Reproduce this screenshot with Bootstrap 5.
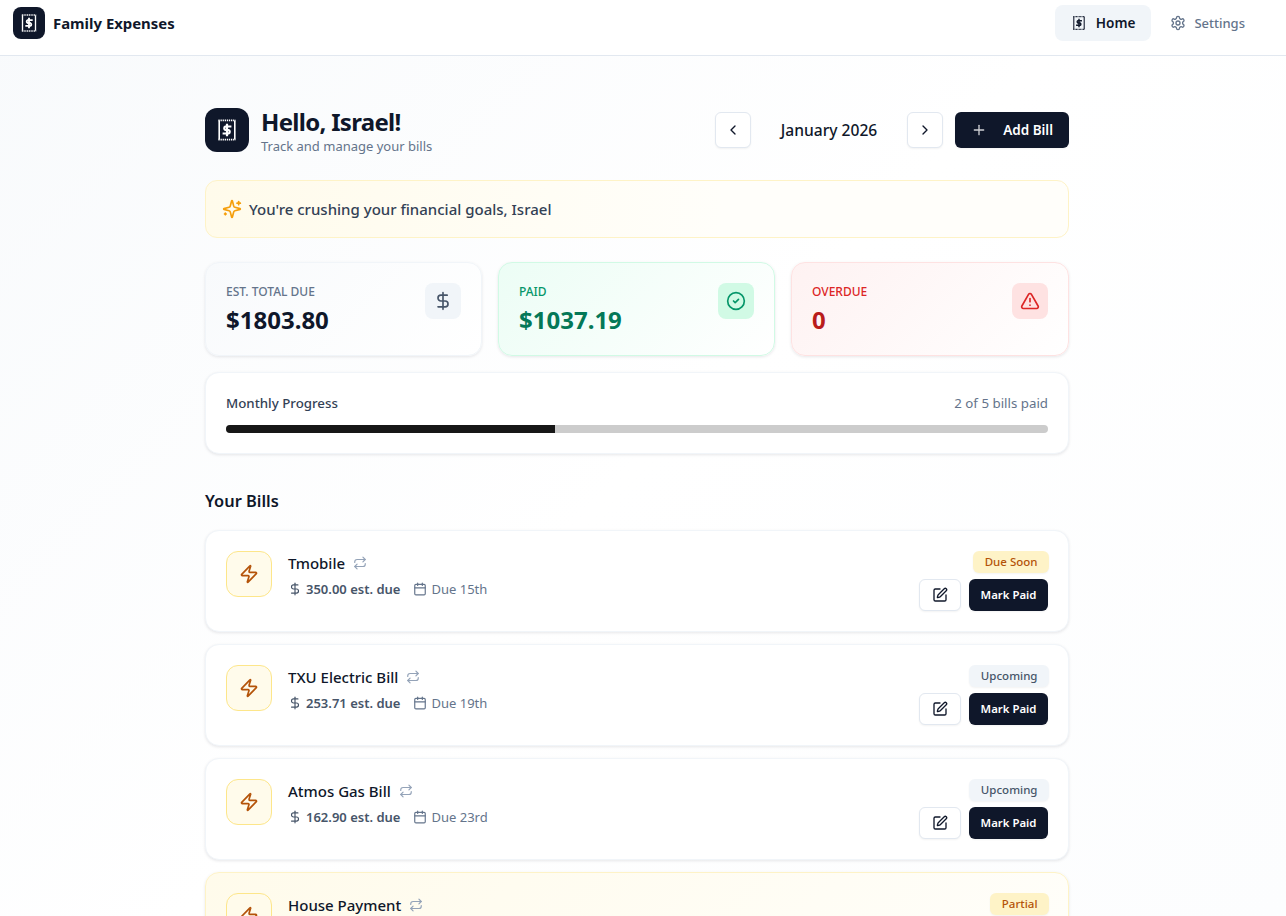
<!doctype html>
<html lang="en">
<head>
<meta charset="utf-8">
<title>Family Expenses</title>
<link href="https://cdn.jsdelivr.net/npm/bootstrap@5.3.0/dist/css/bootstrap.min.css" rel="stylesheet">
<style>
html,body{height:916px;overflow:hidden}
body{font-family:"Noto Sans",sans-serif;color:#0f172a;background:linear-gradient(135deg,#f8fafc 0%,#ffffff 50%,#fcfdfe 100%);font-size:14px}
svg.ic{fill:none;stroke:currentColor;stroke-width:2;stroke-linecap:round;stroke-linejoin:round;flex:none;display:block}
.topbar{height:56px;background:#fff;border-bottom:1px solid #e2e8f0;padding:5px 25px 14px 13px}
.logo-box{width:32px;height:32px;border-radius:8px;background:#0f172a;color:#fff}
.brand-text{font-size:14.9px;font-weight:700;color:#0f172a}
.nav-set{gap:3px}
.nav-pill{height:36px;padding:1px 16px 0;border-radius:8px;font-size:13px;font-weight:500;color:#64748b;text-decoration:none;gap:8px}
.nav-pill svg{margin-top:-1px}
.nav-pill.on{background:#f1f5f9;color:#0f172a;font-weight:600;font-size:13.6px;padding:0 16px 0 16px;gap:9px;margin-left:1px}
.nav-pill.on svg{margin-top:0}
.page-frame{width:1274px}
.page-col{width:864px;margin:0 auto;padding-top:52px}
.hello-gap{gap:12px}
.hello-box{width:44px;height:44px;border-radius:12px;background:#0f172a;color:#fff}
.hello-title{font-size:24px;font-weight:700;line-height:28px;margin:0;color:#0f172a;letter-spacing:-.7px}
.hello-sub{font-size:13px;line-height:20px;color:#64748b;margin:0 0 -4px}
.sq-btn{width:36px;height:36px;padding:0;border:1px solid #e2e8f0;background:#fff;border-radius:6px;color:#0f172a;box-shadow:0 1px 2px rgba(0,0,0,.05)}
.month-label{width:156px;text-align:center;font-size:15.6px;font-weight:500;color:#0f172a;padding-top:2px}
.add-btn{height:36px;width:114px;margin-left:12px;background:#0f172a;color:#fff;border:0;border-radius:6px;font-size:13.5px;font-weight:600;padding:0 16px;box-shadow:0 1px 2px rgba(0,0,0,.05)}
.add-btn:hover{background:#0f172a;color:#fff}
.add-btn svg{opacity:.8}
.cheer{height:58px;margin-top:28px;padding:0 16px;border:1px solid #fef3c7;border-radius:12px;background:linear-gradient(90deg,#fffbeb,#fffefa 60%,#fffefa);font-size:15px;font-weight:500;color:#334155;gap:7px}
.cheer svg{color:#f59e0b}
.stat-row{margin-top:24px;display:grid;grid-template-columns:277px 277px 1fr;gap:16px}
.stat-tile{height:94px;border-radius:14px;padding:20px;border:1px solid #f1f5f9;box-shadow:0 1px 3px rgba(15,23,42,.1)}
.tile-n{background:linear-gradient(135deg,#f8fafc,#fff)}
.tile-g{background:linear-gradient(135deg,#ecfdf5,#fff);border-color:#d1fae5}
.tile-r{background:linear-gradient(135deg,#fef2f2,#fff);border-color:#fee2e2}
.tile-text{margin-top:1px}
.tile-label{font-size:12px;line-height:16px;font-weight:500;text-transform:uppercase;color:#64748b}
.tile-val{font-size:24px;line-height:32px;font-weight:700;margin-top:4px;color:#0f172a}
.tile-ico{width:36px;height:36px;border-radius:8px;background:#f1f5f9;color:#475569}
.c-g{color:#047857}.c-r{color:#b91c1c}
.tile-g .tile-label{color:#059669}.tile-r .tile-label{color:#dc2626}
.tile-g .tile-ico{background:#d1fae5;color:#059669}
.tile-r .tile-ico{background:#fee2e2;color:#dc2626}
.prog-tile{height:82px;margin-top:16px;padding:20px;border:1px solid #f1f5f9;border-radius:14px;background:#fff;box-shadow:0 1px 3px rgba(15,23,42,.1)}
.prog-head{font-size:13.3px;line-height:20px;margin-bottom:12px}
.prog-l{color:#334155;font-weight:500}
.prog-r{color:#64748b}
.prog-track{height:8px;background:#cccccc;border-radius:999px}
.prog-fill{background:#171717;height:8px;border-radius:999px 0 0 999px}
.sec-title{font-size:16.4px;line-height:28px;font-weight:600;margin:33px 0 15px;color:#0f172a}
.bill-tile{height:102px;margin-bottom:12px;padding:20px;border:1px solid #f1f5f9;border-radius:14px;background:#fff;box-shadow:0 1px 3px rgba(15,23,42,.1)}
.bill-warm{background:linear-gradient(135deg,#fffbeb,#fffefa);border-color:#fef3c7}
.zap-box{width:46px;height:46px;border-radius:12px;background:#fffbeb;border:1px solid #fde68a;color:#b45309}
.bill-name{font-size:15px;line-height:24px;font-weight:500;color:#0f172a}
.bill-rep{color:#94a3b8}
.bill-meta{font-size:13px;line-height:20px;color:#64748b;margin-top:4px;gap:13px}
.bill-amt{font-weight:600;color:#475569}
.bill-due{gap:4px}
.tag{height:22px;padding:0 11.5px;margin-right:-1px;border-radius:6px;font-size:11.5px;font-weight:500;line-height:22px;box-shadow:0 1px 2px rgba(0,0,0,.05)}
.tag-soon{background:#fef3c7;color:#b45309}
.tag-up{background:#f1f5f9;color:#475569}
.bill-btns{margin-top:2px}
.edit-btn{width:42px;height:32px;padding:0;border:1px solid #e2e8f0;border-radius:6px;background:#fff;color:#0f172a;box-shadow:0 1px 2px rgba(0,0,0,.05)}
.paid-btn{width:79px;height:32px;padding:0;border:0;border-radius:6px;background:#0f172a;color:#fff;font-size:11.4px;font-weight:600;box-shadow:0 1px 2px rgba(0,0,0,.05)}
.paid-btn:hover{background:#0f172a;color:#fff}
</style>
</head>
<body>
<svg width="0" height="0" class="position-absolute">
<defs>
<symbol id="i-logo" viewBox="0 0 24 24"><path d="M4.2 2.6v18.8M19.8 2.6v18.8" fill="none" stroke="currentColor" stroke-width="1.6"/><path d="M3.4 2.4h17.2M3.4 21.6h17.2" fill="none" stroke="currentColor" stroke-width="1.7" stroke-dasharray="1.3 .8"/><path d="M12 5.8v12.4M16.4 8.5h-6a1.9 1.9 0 0 0 0 3.5h3.2a1.9 1.9 0 0 1 0 3.5H7.6" fill="none" stroke="currentColor" stroke-width="2.2"/></symbol>
<symbol id="i-zap" viewBox="0 0 24 24"><path d="M4 14a1 1 0 0 1-.78-1.63l9.9-10.2a.5.5 0 0 1 .86.46l-1.92 6.02A1 1 0 0 0 13 10h7a1 1 0 0 1 .78 1.63l-9.9 10.2a.5.5 0 0 1-.86-.46l1.92-6.02A1 1 0 0 0 11 14z"/></symbol>
<symbol id="i-rep" viewBox="0 0 24 24"><path d="m17 2 4 4-4 4"/><path d="M3 11v-1a4 4 0 0 1 4-4h14"/><path d="m7 22-4-4 4-4"/><path d="M21 13v1a4 4 0 0 1-4 4H3"/></symbol>
<symbol id="i-usd" viewBox="0 0 24 24"><path d="M12 2v20"/><path d="M17 5H9.5a3.5 3.5 0 0 0 0 7h5a3.5 3.5 0 0 1 0 7H6"/></symbol>
<symbol id="i-cal" viewBox="0 0 24 24"><path d="M8 2v4"/><path d="M16 2v4"/><rect x="3" y="4" width="18" height="18" rx="2"/><path d="M3 10h18"/></symbol>
<symbol id="i-pen" viewBox="0 0 24 24"><path d="M12 3H5a2 2 0 0 0-2 2v14a2 2 0 0 0 2 2h14a2 2 0 0 0 2-2v-7"/><path d="M18.375 2.625a1 1 0 0 1 3 3l-9.013 9.014a2 2 0 0 1-.853.505l-2.873.84a.5.5 0 0 1-.62-.62l.84-2.873a2 2 0 0 1 .506-.852z"/></symbol>
</defs>
</svg>

<nav class="navbar topbar d-flex justify-content-between align-items-center flex-nowrap">
  <div class="d-flex align-items-center gap-2">
    <span class="logo-box d-flex align-items-center justify-content-center"><svg width="20" height="20"><use href="#i-logo"/></svg></span>
    <span class="brand-text">Family Expenses</span>
  </div>
  <div class="d-flex align-items-center nav-set">
    <a class="nav-pill on d-flex align-items-center" href="#"><svg width="16" height="16"><use href="#i-logo"/></svg>Home</a>
    <a class="nav-pill d-flex align-items-center" href="#"><svg class="ic" width="16" height="16" viewBox="0 0 24 24"><path d="M12.22 2h-.44a2 2 0 0 0-2 2v.18a2 2 0 0 1-1 1.73l-.43.25a2 2 0 0 1-2 0l-.15-.08a2 2 0 0 0-2.73.73l-.22.38a2 2 0 0 0 .73 2.73l.15.1a2 2 0 0 1 1 1.72v.51a2 2 0 0 1-1 1.74l-.15.09a2 2 0 0 0-.73 2.73l.22.38a2 2 0 0 0 2.73.73l.15-.08a2 2 0 0 1 2 0l.43.25a2 2 0 0 1 1 1.73V20a2 2 0 0 0 2 2h.44a2 2 0 0 0 2-2v-.18a2 2 0 0 1 1-1.73l.43-.25a2 2 0 0 1 2 0l.15.08a2 2 0 0 0 2.73-.73l.22-.39a2 2 0 0 0-.73-2.73l-.15-.08a2 2 0 0 1-1-1.74v-.5a2 2 0 0 1 1-1.74l.15-.09a2 2 0 0 0 .73-2.73l-.22-.38a2 2 0 0 0-2.73-.73l-.15.08a2 2 0 0 1-2 0l-.43-.25a2 2 0 0 1-1-1.73V4a2 2 0 0 0-2-2z"/><circle cx="12" cy="12" r="3"/></svg>Settings</a>
  </div>
</nav>

<div class="page-frame">
<main class="page-col">
  <div class="d-flex justify-content-between align-items-center">
    <div class="d-flex align-items-center hello-gap">
      <span class="hello-box d-flex align-items-center justify-content-center"><svg width="24" height="24"><use href="#i-logo"/></svg></span>
      <div>
        <h1 class="hello-title">Hello, Israel!</h1>
        <p class="hello-sub">Track and manage your bills</p>
      </div>
    </div>
    <div class="d-flex align-items-center">
      <button class="btn sq-btn d-flex align-items-center justify-content-center"><svg class="ic" width="16" height="16" viewBox="0 0 24 24"><path d="m15 18-6-6 6-6"/></svg></button>
      <span class="month-label">January 2026</span>
      <button class="btn sq-btn d-flex align-items-center justify-content-center"><svg class="ic" width="16" height="16" viewBox="0 0 24 24"><path d="m9 18 6-6-6-6"/></svg></button>
      <button class="btn add-btn d-flex align-items-center justify-content-between"><svg class="ic" width="16" height="16" viewBox="0 0 24 24"><path d="M5 12h14"/><path d="M12 5v14"/></svg>Add Bill</button>
    </div>
  </div>

  <div class="cheer d-flex align-items-center">
    <svg class="ic" width="20" height="20" viewBox="0 0 24 24"><path d="M9.937 15.5A2 2 0 0 0 8.5 14.063l-6.135-1.582a.5.5 0 0 1 0-.962L8.5 9.936A2 2 0 0 0 9.937 8.5l1.582-6.135a.5.5 0 0 1 .963 0L14.063 8.5A2 2 0 0 0 15.5 9.937l6.135 1.581a.5.5 0 0 1 0 .964L15.5 14.063a2 2 0 0 0-1.437 1.437l-1.582 6.135a.5.5 0 0 1-.963 0z"/><path d="M20 3v4"/><path d="M22 5h-4"/><path d="M4 17v2"/><path d="M5 18H3"/></svg>
    <span>You're crushing your financial goals, Israel</span>
  </div>

  <div class="stat-row">
    <div class="stat-tile tile-n d-flex justify-content-between">
      <div class="tile-text"><div class="tile-label">Est. Total Due</div><div class="tile-val">$1803.80</div></div>
      <span class="tile-ico d-flex align-items-center justify-content-center"><svg class="ic" width="20" height="20"><use href="#i-usd"/></svg></span>
    </div>
    <div class="stat-tile tile-g d-flex justify-content-between">
      <div class="tile-text"><div class="tile-label">Paid</div><div class="tile-val c-g">$1037.19</div></div>
      <span class="tile-ico d-flex align-items-center justify-content-center"><svg class="ic" width="20" height="20" viewBox="0 0 24 24"><circle cx="12" cy="12" r="10"/><path d="m9 12 2 2 4-4"/></svg></span>
    </div>
    <div class="stat-tile tile-r d-flex justify-content-between">
      <div class="tile-text"><div class="tile-label">Overdue</div><div class="tile-val c-r">0</div></div>
      <span class="tile-ico d-flex align-items-center justify-content-center"><svg class="ic" width="20" height="20" viewBox="0 0 24 24"><path d="m21.73 18-8-14a2 2 0 0 0-3.48 0l-8 14A2 2 0 0 0 4 21h16a2 2 0 0 0 1.73-3"/><path d="M12 9v4"/><path d="M12 17h.01"/></svg></span>
    </div>
  </div>

  <div class="prog-tile">
    <div class="prog-head d-flex justify-content-between"><span class="prog-l">Monthly Progress</span><span class="prog-r">2 of 5 bills paid</span></div>
    <div class="prog-track"><div class="prog-fill" style="width:40%"></div></div>
  </div>

  <h2 class="sec-title">Your Bills</h2>

  <div class="bill-tile d-flex justify-content-between">
    <div class="d-flex gap-3">
      <span class="zap-box d-flex align-items-center justify-content-center"><svg class="ic" width="20" height="20"><use href="#i-zap"/></svg></span>
      <div>
        <div class="bill-name d-flex align-items-center gap-2">Tmobile <svg class="ic bill-rep" width="14" height="14"><use href="#i-rep"/></svg></div>
        <div class="bill-meta d-flex align-items-center"><span class="d-flex align-items-center gap-1 bill-amt"><svg class="ic" width="14" height="14"><use href="#i-usd"/></svg>350.00 est. due</span><span class="d-flex align-items-center bill-due"><svg class="ic" width="14" height="14"><use href="#i-cal"/></svg>Due 15th</span></div>
      </div>
    </div>
    <div class="d-flex flex-column align-items-end gap-1">
      <span class="tag tag-soon">Due Soon</span>
      <div class="d-flex gap-2 bill-btns"><button class="btn edit-btn d-flex align-items-center justify-content-center"><svg class="ic" width="16" height="16"><use href="#i-pen"/></svg></button><button class="btn paid-btn">Mark Paid</button></div>
    </div>
  </div>

  <div class="bill-tile d-flex justify-content-between">
    <div class="d-flex gap-3">
      <span class="zap-box d-flex align-items-center justify-content-center"><svg class="ic" width="20" height="20"><use href="#i-zap"/></svg></span>
      <div>
        <div class="bill-name d-flex align-items-center gap-2">TXU Electric Bill <svg class="ic bill-rep" width="14" height="14"><use href="#i-rep"/></svg></div>
        <div class="bill-meta d-flex align-items-center"><span class="d-flex align-items-center gap-1 bill-amt"><svg class="ic" width="14" height="14"><use href="#i-usd"/></svg>253.71 est. due</span><span class="d-flex align-items-center bill-due"><svg class="ic" width="14" height="14"><use href="#i-cal"/></svg>Due 19th</span></div>
      </div>
    </div>
    <div class="d-flex flex-column align-items-end gap-1">
      <span class="tag tag-up">Upcoming</span>
      <div class="d-flex gap-2 bill-btns"><button class="btn edit-btn d-flex align-items-center justify-content-center"><svg class="ic" width="16" height="16"><use href="#i-pen"/></svg></button><button class="btn paid-btn">Mark Paid</button></div>
    </div>
  </div>

  <div class="bill-tile d-flex justify-content-between">
    <div class="d-flex gap-3">
      <span class="zap-box d-flex align-items-center justify-content-center"><svg class="ic" width="20" height="20"><use href="#i-zap"/></svg></span>
      <div>
        <div class="bill-name d-flex align-items-center gap-2">Atmos Gas Bill <svg class="ic bill-rep" width="14" height="14"><use href="#i-rep"/></svg></div>
        <div class="bill-meta d-flex align-items-center"><span class="d-flex align-items-center gap-1 bill-amt"><svg class="ic" width="14" height="14"><use href="#i-usd"/></svg>162.90 est. due</span><span class="d-flex align-items-center bill-due"><svg class="ic" width="14" height="14"><use href="#i-cal"/></svg>Due 23rd</span></div>
      </div>
    </div>
    <div class="d-flex flex-column align-items-end gap-1">
      <span class="tag tag-up">Upcoming</span>
      <div class="d-flex gap-2 bill-btns"><button class="btn edit-btn d-flex align-items-center justify-content-center"><svg class="ic" width="16" height="16"><use href="#i-pen"/></svg></button><button class="btn paid-btn">Mark Paid</button></div>
    </div>
  </div>

  <div class="bill-tile bill-warm d-flex justify-content-between">
    <div class="d-flex gap-3">
      <span class="zap-box d-flex align-items-center justify-content-center"><svg class="ic" width="20" height="20"><use href="#i-zap"/></svg></span>
      <div>
        <div class="bill-name d-flex align-items-center gap-2">House Payment <svg class="ic bill-rep" width="14" height="14"><use href="#i-rep"/></svg></div>
      </div>
    </div>
    <div class="d-flex flex-column align-items-end gap-1">
      <span class="tag tag-soon">Partial</span>
    </div>
  </div>
</main>
</div>
<script src="https://cdn.jsdelivr.net/npm/bootstrap@5.3.0/dist/js/bootstrap.bundle.min.js"></script>
</body>
</html>
